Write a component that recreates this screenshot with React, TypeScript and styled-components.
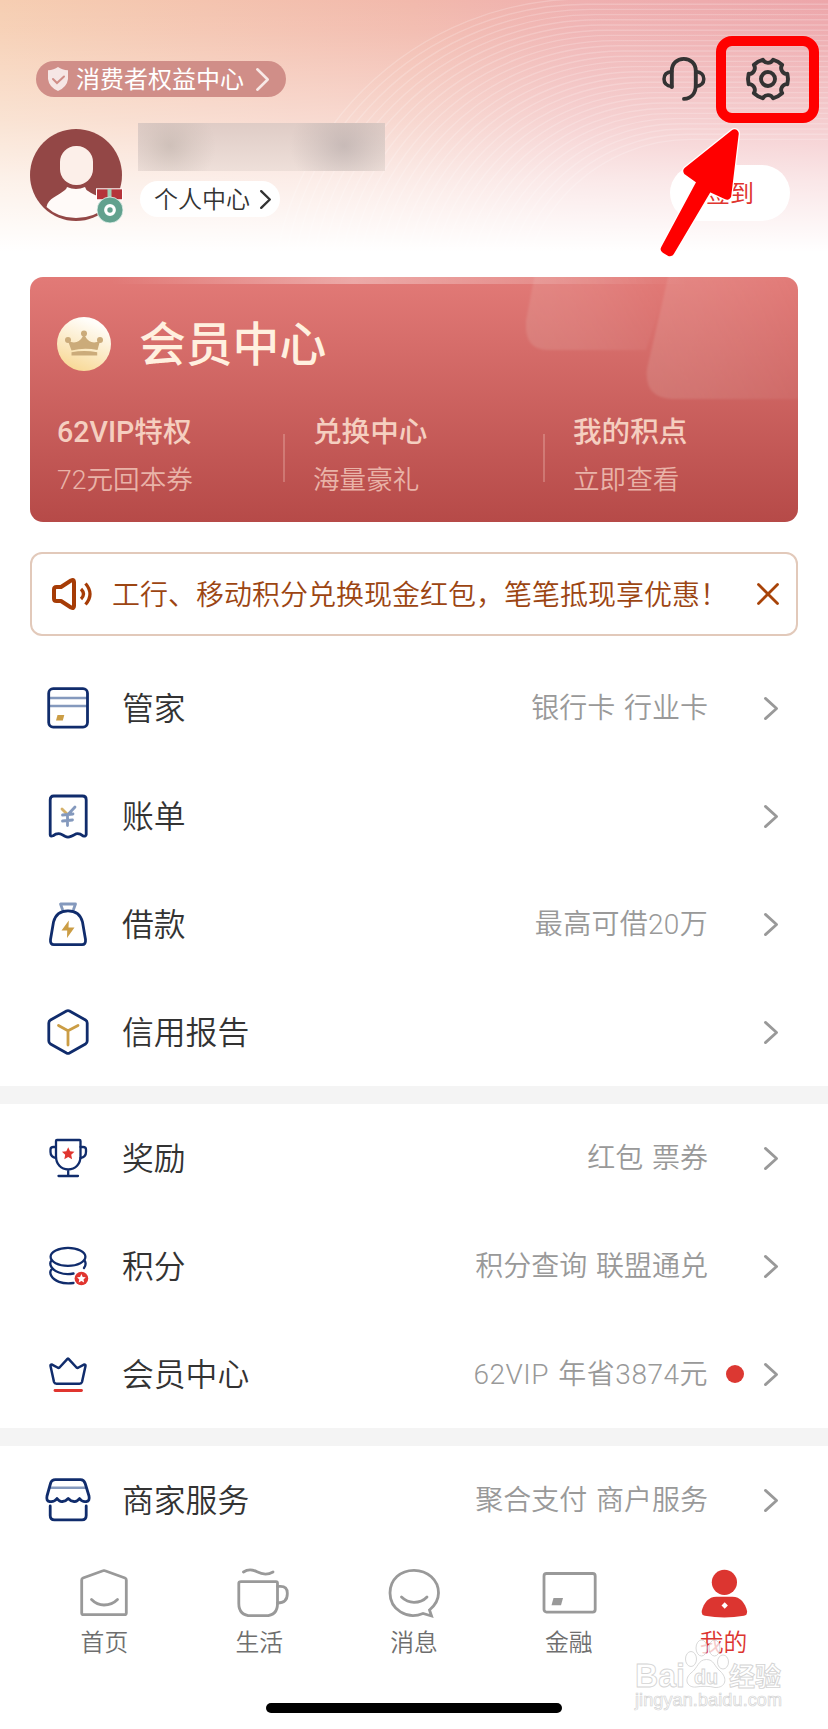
import React from "react";
import styled, { createGlobalStyle } from "styled-components";

const GlobalStyle = createGlobalStyle`
  * { box-sizing: border-box; }
  body {
    margin: 0;
    background: #fff;
    font-family: Roboto, "Noto Sans CJK SC", sans-serif;
    color: #333;
  }
  svg { display: block; flex: none; overflow: visible; }
`;

const Screen = styled.main`
  position: relative;
  width: 828px;
  height: 1729px;
  overflow: hidden;
  display: flex;
  flex-direction: column;
  background: #fff;
`;

/* ---------- header ---------- */

const Header = styled.header`
  position: relative;
  height: 277px;
  padding: 55px 38px 0 30px;
  overflow: hidden;
  background: linear-gradient(90deg, #f6ceb2 0%, #f2b9ac 50%, #efb0b0 70%, #eda6aa 100%);
`;

const HeaderRings = styled.svg`
  position: absolute;
  inset: 0;
`;

const HeaderFade = styled.div`
  position: absolute;
  inset: 0;
  background: linear-gradient(
    180deg,
    rgba(255, 255, 255, 0) 0,
    rgba(255, 255, 255, 0.08) 30px,
    rgba(255, 255, 255, 0.43) 120px,
    rgba(255, 255, 255, 0.72) 180px,
    #fff 252px
  );
`;

const HeaderContent = styled.div`
  position: relative;
`;

const TopRow = styled.div`
  display: flex;
  align-items: center;
  justify-content: space-between;
  height: 48px;
`;

const RightsPill = styled.a`
  display: flex;
  align-items: center;
  width: 250px;
  height: 36px;
  margin-left: 6px;
  padding: 0 17px 0 11px;
  border-radius: 18px;
  background: #d08e88;
  color: #fff;
  font-size: 24px;
  font-weight: 400;
  line-height: 36px;

  span { margin: 1px auto 0 7px; white-space: nowrap; }
`;

const TopActions = styled.div`
  display: flex;
  gap: 36px;
  margin-right: -2px;
`;

const ProfileRow = styled.div`
  display: flex;
  margin-top: 20px;
`;

const AvatarWrap = styled.div`
  position: relative;
  width: 92px;
  height: 92px;
  margin-top: 6px;
`;

const Medal = styled.svg`
  position: absolute;
  left: 66px;
  top: 59px;
`;

const ProfileInfo = styled.div`
  display: flex;
  flex-direction: column;
  margin-left: 16px;
`;

const HiddenName = styled.div`
  width: 247px;
  height: 48px;
  background:
    radial-gradient(ellipse 46px 44px at 32px 23px, rgba(184, 172, 164, 0.5), rgba(184, 172, 164, 0.22) 50%, transparent),
    radial-gradient(ellipse 54px 48px at 206px 23px, rgba(170, 160, 160, 0.5), rgba(170, 160, 160, 0.24) 50%, transparent),
    linear-gradient(180deg, #dfccc6, #eedfd9);
`;

const CenterPill = styled.a`
  display: flex;
  align-items: center;
  width: 140px;
  height: 36px;
  margin: 10px 0 0 2px;
  padding: 0 10px 0 14px;
  border-radius: 18px;
  background: #fff;
  font-size: 24px;
  font-weight: 350;
  line-height: 36px;

  span { margin: 1px 10px 0 0; white-space: nowrap; }
`;

const CheckIn = styled.button`
  width: 120px;
  height: 56px;
  margin: 42px 0 0 auto;
  padding: 0 0 3px;
  border: 0;
  border-radius: 28px;
  background: #fff;
  color: #e0352f;
  font: 24px "Noto Sans CJK SC", sans-serif;
`;

/* ---------- membership card ---------- */

const VipCard = styled.section`
  position: relative;
  height: 245px;
  margin: 0 30px;
  padding: 40px 27px 0;
  flex: none;
  border-radius: 13px;
  overflow: hidden;
  background: linear-gradient(180deg, #e27a77 0%, #b64a48 100%);
`;

const CardDecor = styled.svg`
  position: absolute;
  inset: 0;
`;

const CardTitle = styled.h2`
  position: relative;
  display: flex;
  align-items: center;
  gap: 28px;
  height: 54px;
  margin: 0;
  color: #fff0df;
  font-size: 46.8px;
  font-weight: 500;
  line-height: 54px;

  span { margin-top: 2px; }
`;

const Perks = styled.div`
  position: relative;
  display: flex;
  margin-top: 43px;
`;

const Perk = styled.div<{ $width: number; $divided?: boolean }>`
  position: relative;
  width: ${(p) => p.$width}px;
  white-space: nowrap;

  &::after {
    content: "";
    display: ${(p) => (p.$divided ? "block" : "none")};
    position: absolute;
    right: 28px;
    top: 20px;
    width: 2px;
    height: 48px;
    background: rgba(255, 226, 214, 0.25);
  }
`;

const PerkName = styled.div`
  height: 34px;
  color: #f5cfc0;
  font-size: 28.6px;
  font-weight: 500;
  line-height: 36px;
`;

const PerkNote = styled.div`
  height: 34px;
  margin-top: 14px;
  color: #e9b3a8;
  font-size: 26.6px;
  font-weight: 350;
  line-height: 36px;
`;

/* ---------- notice ---------- */

const Notice = styled.aside`
  display: flex;
  align-items: center;
  height: 84px;
  margin: 30px 30px 18px;
  padding: 0 17px 0 20px;
  flex: none;
  border: 2px solid #e2c9ba;
  border-radius: 12px;
  color: #9c4512;
  font-size: 28px;
  line-height: 40px;
  white-space: nowrap;

  span {
    width: 616px;
    margin: -2px auto 0 18px;
    font-family: "Noto Sans CJK SC", sans-serif;
    font-weight: 350;
  }
`;

/* ---------- list ---------- */

const Section = styled.section`
  flex: none;

  & + & { border-top: 18px solid #f4f4f4; }
`;

const Row = styled.a`
  display: flex;
  align-items: center;
  height: 108px;
  padding: 0 50px 0 44px;
`;

const RowLabel = styled.span`
  margin: 2px auto 0 30px;
  font-size: 31.8px;
  font-weight: 350;
  line-height: 40px;
`;

const RowNote = styled.span<{ $tracking: number }>`
  margin-top: 2px;
  color: #999;
  font-size: 28px;
  font-weight: 350;
  line-height: 40px;
  letter-spacing: ${(p) => p.$tracking}px;
  word-spacing: 2px;
`;

const RowEnd = styled.span`
  display: flex;
  align-items: center;
  justify-content: flex-end;
  gap: 20px;
  width: 70px;
`;

const Dot = styled.i`
  width: 18px;
  height: 18px;
  border-radius: 50%;
  background: #dc3832;
`;

/* ---------- tab bar ---------- */

const TabBar = styled.nav`
  display: flex;
  padding: 11px 27px 0;
  background: #fff;
`;

const Tab = styled.a<{ $active?: boolean }>`
  display: flex;
  flex: 1;
  flex-direction: column;
  align-items: center;
  color: ${(p) => (p.$active ? "#dc3530" : "#6e6e6e")};
  font-size: 23.8px;
  font-weight: 350;
  line-height: 34px;

  span { margin-top: 5px; }
`;

const HomeIndicator = styled.div`
  width: 296px;
  height: 10px;
  margin: 43px auto 0;
  border-radius: 5px;
  background: #000;
`;

/* ---------- overlays ---------- */

const Highlight = styled.div`
  position: absolute;
  left: 716px;
  top: 36px;
  width: 103px;
  height: 87px;
  border: 10px solid #f00;
  border-radius: 16px;
`;

const Arrow = styled.svg`
  position: absolute;
  left: 650px;
  top: 120px;
`;

const Watermark = styled.svg`
  position: absolute;
  left: 628px;
  top: 1636px;
`;

/* ---------- icons ---------- */

const NAVY = "#102c6c";
const BLUE = "#8499bd";
const GOLD = "#cb9d45";
const RED = "#e0352f";

type ChevronProps = { w: number; h: number; color: string; stroke: number };

const Chevron = ({ w, h, color, stroke }: ChevronProps) => (
  <svg width={w} height={h} fill="none" stroke={color} strokeWidth={stroke} strokeLinecap="round" strokeLinejoin="round">
    <path d={`M${stroke / 2} ${stroke / 2}L${w - stroke / 2} ${h / 2}L${stroke / 2} ${h - stroke / 2}`} />
  </svg>
);

const starPath = (cx: number, cy: number, r: number) =>
  Array.from({ length: 10 }, (_, i) => {
    const a = -Math.PI / 2 + (i * Math.PI) / 5;
    const rad = i % 2 ? r * 0.48 : r;
    return `${i ? "L" : "M"}${(cx + rad * Math.cos(a)).toFixed(2)} ${(cy + rad * Math.sin(a)).toFixed(2)}`;
  }).join("") + "Z";

const gearPath = () => {
  const point = (deg: number) => {
    const a = (deg * Math.PI) / 180;
    return `${(24 + 20 * Math.cos(a)).toFixed(2)} ${(24 + 20 * Math.sin(a)).toFixed(2)}`;
  };
  return (
    `M${point(-15)}` +
    [0, 60, 120, 180, 240, 300].map((d) => `L${point(d)}L${point(d + 15)}A5.8 5.8 0 0 0 ${point(d + 45)}`).join("") +
    "Z"
  );
};

const Icon = ({ children }: { children: React.ReactNode }) => (
  <svg width="48" height="48" fill="none" stroke={NAVY} strokeWidth="2.8" strokeLinecap="round" strokeLinejoin="round">
    {children}
  </svg>
);

const icons = {
  cards: (
    <Icon>
      <path d="M5 14H43M5 22H43" stroke={BLUE} strokeWidth="2.4" strokeLinecap="butt" />
      <rect x="4.7" y="4.7" width="38.8" height="38.4" rx="4.5" />
      <path d="M13.5 31H20.3L18.8 36.4H12Z" fill={GOLD} stroke="none" />
    </Icon>
  ),
  bill: (
    <Icon>
      <path d="M9.7 4H38.5Q42.2 4 42.2 7.7V42.7Q42 44.8 39 43.8Q35.5 41 32 41.8Q29.5 43.5 27 44.3Q24 45.8 21 44.3Q18 42.5 16 41.8Q12 41.3 9 43.8Q6.2 44.8 6.2 42.7V7.7Q6.2 4 9.7 4Z" />
      <path d="M18 17L23 22" stroke={GOLD} opacity=".8" />
      <path d="M31 15L23.5 23V33.5M18.5 23L29 22M18.5 29L28.5 28" stroke={BLUE} />
    </Icon>
  ),
  loan: (
    <Icon>
      <path d="M18.5 9.5L16.5 4H31.5L29.5 9.5" stroke={BLUE} />
      <path d="M24 10.8C15.5 10.8 11 16 9.5 22L6.5 39.5Q6 44.7 10 44.7H38Q42 44.7 41.5 39.5L38.5 22C37 16 32.5 10.8 24 10.8Z" />
      <path d="M24.8 20.5L17.5 30.5H23.2L23 38L30.5 27.5H24.5Z" fill={GOLD} stroke="none" />
    </Icon>
  ),
  credit: (
    <Icon>
      <path d="M22.5 3Q24 2.2 25.5 3L41.5 12Q43.2 13 43.2 15V33Q43.2 35 41.5 36L25.5 45Q24 45.8 22.5 45L6.5 36Q4.8 35 4.8 33V15Q4.8 13 6.5 12Z" />
      <path d="M14.5 17.5L24 22.7L34 17.5M24 23V37" stroke={GOLD} />
    </Icon>
  ),
  award: (
    <Icon>
      <g strokeWidth="2.3">
        <path d="M13 6H35.5Q36.5 6 36.5 7V22.5C36.5 30 31.5 35.5 24.2 35.5C17 35.5 12 30 12 22.5V7Q12 6 13 6ZM24.2 35.5V42M14.5 42H34" />
        <path d="M12 13H9.5Q6.5 13 6.5 15.5V18Q6.5 23 12 24M36.5 13H39Q42 13 42 15.5V18Q42 23 36.5 24" />
      </g>
      <path d={starPath(24.2, 19.8, 6.6)} fill={RED} stroke="none" />
    </Icon>
  ),
  points: (
    <Icon>
      <g strokeWidth="2.3">
        <ellipse cx="24" cy="14.8" rx="17.4" ry="9" />
        <path d="M7.5 18.5C4.5 22 7.5 28 15 30.5C19.5 32.2 26 32.2 29.5 31.5M40.5 18.5C42.5 21.5 41.5 24 40 26" />
        <path d="M7.5 27.5C4.5 31 7.5 37 15 39.8C19.5 41.5 25 41.5 29.5 41" />
      </g>
      <circle cx="37.4" cy="36.5" r="6.8" fill={RED} stroke="none" />
      <path d={starPath(37.4, 36.7, 4.6)} fill="#fff" stroke="none" />
    </Icon>
  ),
  crown: (
    <Icon>
      <path strokeWidth="2.5" d="M23 9.3Q24 7.5 25 9.3L32.5 17.5Q33.5 18.3 34.5 17.5L39.5 14.8Q42 14 41.5 16L38 32Q37.5 33.7 35.5 33.7H12.5Q10.5 33.7 10 32L6.5 16Q6 14 8.5 14.8L13.5 17.5Q14.5 18.3 15.5 17.5Z" />
      <path d="M11 40.5H37.5" stroke={RED} />
    </Icon>
  ),
  shop: (
    <Icon>
      <path d="M6 11.7H42" stroke={BLUE} strokeWidth="2.6" strokeLinecap="butt" />
      <path d="M11.5 3.7H36.5Q40 3.7 41.2 7.5L45 20Q46 25 42.5 25.5Q38.5 26.5 35.5 22.5Q33 26 30 25.5Q27 25.5 24.2 22.5Q21.5 25.5 18.5 25.5Q15.5 26 13 22.5Q10 26.5 5.5 25.5Q2 25 3 20L6.5 7.5Q7.5 3.7 11.5 3.7Z" />
      <path d="M6.2 30V39.5Q6.2 43.9 10.5 43.9H38Q42.2 43.9 42.2 39.5V30" />
    </Icon>
  ),
};

const TabIcon = ({ children }: { children: React.ReactNode }) => (
  <svg width="56" height="56" fill="none" stroke="#999" strokeWidth="2.8" strokeLinecap="round" strokeLinejoin="round">
    {children}
  </svg>
);

const tabIcons = {
  home: (
    <TabIcon>
      <path d="M27 5.8Q28 5.3 29 5.8L49 13Q50.3 13.5 50.3 15V48Q50.3 49.7 48.6 49.7H7.4Q5.7 49.7 5.7 48V15Q5.7 13.5 7 13Z" />
      <path d="M15.5 34.5Q21 40 28 40Q36 40 41.5 34.5" />
    </TabIcon>
  ),
  life: (
    <TabIcon>
      <path d="M10 16.7H45Q46.5 16.7 46.5 18.2V38.5Q46.5 50.7 34.5 50.7H20Q7.8 50.7 7.8 38.5V18.2Q7.8 16.7 10 16.7Z" />
      <path d="M46.5 21.3H49.5Q56.3 21.3 56.3 28V29Q56.3 38 46.5 38" />
      <path d="M12.5 7C17 4 21.5 4.5 26 6.8S37 9.8 42 7" />
    </TabIcon>
  ),
  chat: (
    <TabIcon>
      <path strokeLinejoin="miter" d="M37 48.5C21 55 4 44.5 4 28C4 14.5 14.5 5.3 28 5.3S52.5 15 52.5 28C52.5 35 49.5 40 43.5 45L45.5 51Z" />
      <path d="M15.5 32Q21 37.3 28 37.3Q36 37.3 41 32" />
    </TabIcon>
  ),
  card: (
    <TabIcon>
      <rect x="3" y="8.5" width="51.2" height="38.6" rx="2.5" />
      <path d="M12.5 33H22L20 40.3H10.5Z" fill="#999" stroke="none" />
    </TabIcon>
  ),
  me: (
    <TabIcon>
      <circle cx="28.4" cy="17.3" r="12.6" fill="#dc3530" stroke="none" />
      <path d="M20.4 31.8H36.4C44.4 31.8 48.9 38 51.1 46Q51.4 50 47.9 50.8Q28.4 54 8.9 50.8Q5.4 50 5.7 46C7.9 38 12.4 31.8 20.4 31.8Z" fill="#dc3530" stroke="none" />
      <path d="M28.7 37.3L31.9 40.5L28.7 43.7L25.5 40.5Z" fill="#fff" stroke="none" />
    </TabIcon>
  ),
};

const rings = Array.from({ length: 28 }, (_, i) => ({ r: 311 - i * 5.2, cx: 583 + i * 4 }));

type Item = { icon: keyof typeof icons; label: string; note?: string; tracking?: number; dot?: boolean };

const sections: Item[][] = [
  [
    { icon: "cards", label: "管家", note: "银行卡 行业卡" },
    { icon: "bill", label: "账单" },
    { icon: "loan", label: "借款", note: "最高可借20万", tracking: 0.3 },
    { icon: "credit", label: "信用报告" },
  ],
  [
    { icon: "award", label: "奖励", note: "红包 票券" },
    { icon: "points", label: "积分", note: "积分查询 联盟通兑" },
    { icon: "crown", label: "会员中心", note: "62VIP 年省3874元", tracking: 0.5, dot: true },
  ],
  [{ icon: "shop", label: "商家服务", note: "聚合支付 商户服务" }],
];

const tabs: { icon: keyof typeof tabIcons; label: string; active?: boolean }[] = [
  { icon: "home", label: "首页" },
  { icon: "life", label: "生活" },
  { icon: "chat", label: "消息" },
  { icon: "card", label: "金融" },
  { icon: "me", label: "我的", active: true },
];

const arrowShape = "M84.5 13.500L37.500 51L51.500 61L15 129L20 132L58.500 67L77 75.500Z";

export default function App() {
  return (
    <Screen lang="zh-CN">
      <GlobalStyle />
      <Header>
        <HeaderRings width="828" height="277" fill="none" stroke="#fff" strokeOpacity=".2" strokeWidth="1.4">
          {rings.map(({ r, cx }) => (
            <path key={r} d={`M${cx - r} 310A${r} ${r} 0 0 1 ${cx} ${310 - r}H828`} />
          ))}
        </HeaderRings>
        <HeaderFade />
        <HeaderContent>
          <TopRow>
            <RightsPill>
              <svg width="22" height="24" fill="none">
                <path d="M11 0Q15 3 21 3.2V12Q20 20 11 24Q2 20 1 12V3.2Q7 3 11 0Z" fill="#f6e6e5" />
                <path d="M6 12L10 16L17 9.5" stroke="#d08e88" strokeWidth="2" strokeLinecap="round" />
              </svg>
              <span>消费者权益中心</span>
              <Chevron w={13} h={23} color="#f8e9e7" stroke={2.6} />
            </RightsPill>
            <TopActions>
              <svg width="48" height="48" fill="none" stroke="#333" strokeWidth="3.9" strokeLinecap="round">
                <path d="M11.8 32V16C11.8 8.5 17 3.9 23.8 3.9S35.8 8.5 35.8 16V30C35.8 38.5 31 43.5 24 43.9" />
                <path d="M11.8 16.5C7.5 17 4 19 4 24S7.5 31 11.8 31.5M35.8 16.5C40 17 43.8 19 43.8 24S40 31 35.8 31.5" strokeWidth="3.5" />
              </svg>
              <svg width="48" height="48" fill="none" stroke="#333" strokeWidth="3.9" strokeLinejoin="round">
                <path d={gearPath()} />
                <circle cx="24" cy="24" r="7" />
              </svg>
            </TopActions>
          </TopRow>
          <ProfileRow>
            <AvatarWrap>
              <svg width="92" height="92">
                <circle cx="46" cy="46" r="46" fill="#934746" />
                <path d="M16.5 78C18 69 28 67 35 61Q36.5 60 37 58Q46 62 55 58Q56 61 58 62C65 67 74 68 76 78Q64 89 46 89T16.5 78Z" fill="#fffaf8" />
                <rect x="30" y="17" width="33" height="39" rx="16" fill="#fcefe9" />
              </svg>
              <Medal width="27" height="36">
                <rect x=".5" y=".8" width="26" height="11" fill="#b5343a" stroke="#fff" />
                <rect x="11.5" y="1" width="4" height="11" fill="#9fcdb5" />
                <circle cx="14" cy="22" r="13" fill="#62a18e" stroke="#e8f3ef" strokeWidth=".8" />
                <circle cx="14" cy="22" r="4.3" fill="none" stroke="#fff" strokeWidth="3.2" />
              </Medal>
            </AvatarWrap>
            <ProfileInfo>
              <HiddenName />
              <CenterPill>
                <span>个人中心</span>
                <Chevron w={11} h={19} color="#333" stroke={2.4} />
              </CenterPill>
            </ProfileInfo>
            <CheckIn>签到</CheckIn>
          </ProfileRow>
        </HeaderContent>
      </Header>

      <VipCard>
        <CardDecor width="768" height="245">
          <defs>
            <linearGradient id="shine">
              <stop offset="0" stopColor="#fff" stopOpacity="0" />
              <stop offset=".42" stopColor="#fff" stopOpacity=".36" />
              <stop offset="1" stopColor="#fff" stopOpacity="0" />
            </linearGradient>
            <linearGradient id="pane" x1="0" y1=".6" x2="1" y2=".3">
              <stop offset="0" stopColor="#e8d0c8" stopOpacity=".17" />
              <stop offset=".95" stopColor="#fff" stopOpacity="0" />
            </linearGradient>
            <filter id="soft"><feGaussianBlur stdDeviation="1.2" /></filter>
          </defs>
          <g fill="url(#pane)" filter="url(#soft)">
            <path d="M505 -4L496 44Q494 73 518 73H616L640 -4Z" />
            <path d="M639 -4L617 92Q614 121 642 122H800V-4Z" />
          </g>
          <rect x="80" width="580" height="7" fill="url(#shine)" />
        </CardDecor>
        <CardTitle>
          <svg width="54" height="54">
            <defs>
              <linearGradient id="coin" x1=".7" y1="0" x2=".3" y2="1">
                <stop offset=".1" stopColor="#fffdf9" />
                <stop offset="1" stopColor="#f8d894" />
              </linearGradient>
            </defs>
            <circle cx="27" cy="27" r="27" fill="url(#coin)" />
            <g fill="#cbab7a">
              <path d="M11 24Q21 28.5 26 19H28Q33 28.5 43 24L40.5 33Q27 30.5 14.5 33.5Z" />
              <path d="M14.5 35.3Q27 32.5 40.2 35.3V38.5H14.5Z" />
              <path d="M26 18H28V24H26Z" />
              <circle cx="27" cy="16.5" r="3" />
              <circle cx="11" cy="23" r="3" />
              <circle cx="43" cy="23" r="3" />
            </g>
          </svg>
          <span>会员中心</span>
        </CardTitle>
        <Perks>
          <Perk $width={256} $divided>
            <PerkName>62VIP特权</PerkName>
            <PerkNote>72元回本券</PerkNote>
          </Perk>
          <Perk $width={260} $divided>
            <PerkName>兑换中心</PerkName>
            <PerkNote>海量豪礼</PerkNote>
          </Perk>
          <Perk $width={198}>
            <PerkName>我的积点</PerkName>
            <PerkNote>立即查看</PerkNote>
          </Perk>
        </Perks>
      </VipCard>

      <Notice>
        <svg width="42" height="34" fill="none" stroke="#a63c06" strokeWidth="4" strokeLinecap="round" strokeLinejoin="round">
          <path d="M2 12.5Q2 10 4.5 10H9L19 3.5Q22 2 22 5V29Q22 32 19 30.5L9 24H4.5Q2 24 2 21.5Z" />
          <path d="M29 12Q34 17 29 22M33.5 6.5Q42.5 17 33.5 27.5" strokeWidth="3.2" strokeLinecap="butt" />
        </svg>
        <span>工行、移动积分兑换现金红包，笔笔抵现享优惠！</span>
        <svg width="22" height="22" stroke="#a84308" strokeWidth="2.8" strokeLinecap="round">
          <path d="M1.5 1.5L20.5 20.5M20.5 1.5L1.5 20.5" />
        </svg>
      </Notice>

      {sections.map((items, i) => (
        <Section key={i}>
          {items.map((item) => (
            <Row key={item.label}>
              {icons[item.icon]}
              <RowLabel>{item.label}</RowLabel>
              {item.note && <RowNote $tracking={item.tracking ?? 0}>{item.note}</RowNote>}
              <RowEnd>
                {item.dot && <Dot />}
                <Chevron w={14} h={23} color="#999" stroke={2.8} />
              </RowEnd>
            </Row>
          ))}
        </Section>
      ))}

      <TabBar>
        {tabs.map((tab) => (
          <Tab key={tab.label} $active={tab.active}>
            {tabIcons[tab.icon]}
            <span>{tab.label}</span>
          </Tab>
        ))}
      </TabBar>
      <HomeIndicator />

      <Highlight />
      <Arrow width="100" height="145" strokeLinejoin="round">
        <path d={arrowShape} fill="#fff" stroke="#fff" strokeWidth="11" />
        <path d={arrowShape} fill="#f00" stroke="#f00" strokeWidth="8.5" />
      </Arrow>
      <Watermark width="170" height="84" fill="#fff" stroke="#d4d4d4" strokeWidth=".9" fontFamily='"Liberation Sans", "Noto Sans CJK SC", sans-serif'>
        <g fillOpacity=".75">
          <ellipse cx="63" cy="23" rx="5.5" ry="7.5" />
          <ellipse cx="73.5" cy="12" rx="5.5" ry="8" />
          <ellipse cx="86.5" cy="12" rx="5.5" ry="8" />
          <ellipse cx="95" cy="26" rx="5.5" ry="7" />
          <path d="M78.5 23.5C70 23.5 70 32 63 37C55 44 60 52 68 51C74 50 82 50 87 51.5C98 52 100 42 92 35C86 30 86 23.5 78.5 23.5Z" />
        </g>
        <text x="7" y="51" fontSize="34" fontWeight="700" textLength="50" lengthAdjust="spacingAndGlyphs">Bai</text>
        <text x="66" y="48" fontSize="20" fontWeight="700" textLength="24" lengthAdjust="spacingAndGlyphs">du</text>
        <text x="101" y="50" fontSize="26" fontWeight="700" textLength="52">经验</text>
        <text x="7" y="70" fontSize="18" strokeWidth=".7" textLength="147">jingyan.baidu.com</text>
      </Watermark>
    </Screen>
  );
}
